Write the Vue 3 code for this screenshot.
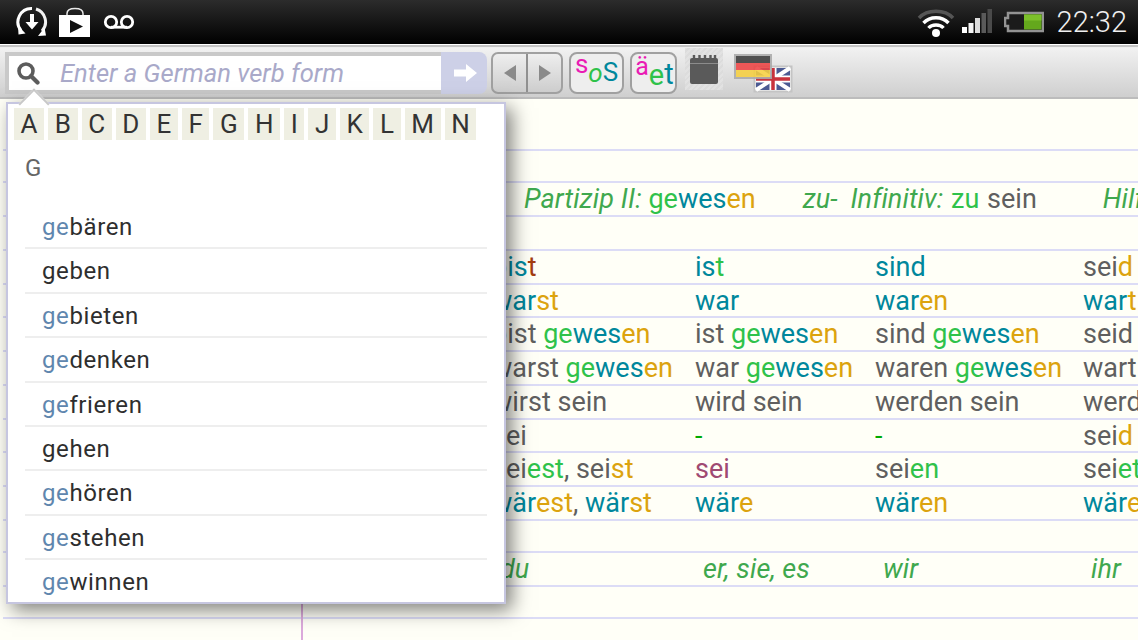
<template>
  <div class="screen">
    <!-- android status bar -->
    <header class="status-bar">
      <div class="status-left">
        <svg width="32" height="32" viewBox="0 0 32 32" class="ic-sync">
          <path d="M5 24.5A13.5 13.5 0 0 1 16 2.5" fill="none" stroke="#fff" stroke-width="3" />
          <path d="M20 3A13.5 13.5 0 0 1 26 25" fill="none" stroke="#f2f2f2" stroke-width="3" />
          <path d="M2 19.5L9.5 27.5L2.5 28.5Z M22 30L30 29.5L28.5 21.5Z" fill="#fff" />
          <path d="M14 8h4v8h4.5L16 23.5L9.5 16H14Z" fill="#fff" />
        </svg>
        <svg width="32" height="30" viewBox="0 0 32 30" class="ic-bag">
          <path d="M8 9V6.5C8 3.5 11 1.5 16 1.5S24 3.5 24 6.5V9" fill="none" stroke="#e8e8e8" stroke-width="1.5" />
          <path d="M0 8H31V30H0Z" fill="#fff" />
          <path d="M11 13L24 19.5L11 26Z" fill="#111" />
        </svg>
        <svg width="32" height="16" viewBox="0 0 32 16" class="ic-vm">
          <circle cx="8" cy="8" r="5.7" fill="none" stroke="#fff" stroke-width="2.8" />
          <circle cx="24" cy="8" r="5.7" fill="none" stroke="#fff" stroke-width="2.8" />
          <path d="M8 13.2H24" stroke="#fff" stroke-width="2.8" />
        </svg>
      </div>
      <div class="status-right">
        <svg width="38" height="32" viewBox="0 0 38 32" class="ic-wifi">
          <path d="M2 12C10 3 28 3 36 12" fill="none" stroke="#555" stroke-width="3.4" />
          <path d="M6.5 17C13 10 25 10 31.5 17" fill="none" stroke="#fff" stroke-width="3.4" />
          <path d="M11.5 22C15 18 23 18 26.5 22" fill="none" stroke="#fff" stroke-width="3.4" />
          <circle cx="19" cy="27" r="4" fill="#fff" />
        </svg>
        <svg width="30" height="26" viewBox="0 0 30 26" class="ic-signal">
          <rect x="0" y="18" width="5" height="6" fill="#fff" />
          <rect x="6.5" y="14" width="5" height="10" fill="#f4f4f4" />
          <rect x="13" y="9" width="5" height="15" fill="#dcdcdc" />
          <rect x="19.5" y="4" width="4.5" height="20" fill="#5a5a5a" />
          <rect x="25.5" y="0" width="4.5" height="24" fill="#4a4a4a" />
        </svg>
        <svg width="40" height="22" viewBox="0 0 40 22" class="ic-battery">
          <path d="M4 2H39V20H4V15H1V7H4Z" fill="#1b1b1b" stroke="#939393" stroke-width="2.5" />
          <rect x="20" y="3.5" width="17.5" height="15" fill="#64a81c" />
          <rect x="20" y="3.5" width="17.5" height="6" fill="#7cc02a" />
        </svg>
        <span class="clock">22:32</span>
      </div>
    </header>
    <div class="status-edge"></div>

    <!-- toolbar -->
    <nav class="toolbar">
      <div class="search">
        <div class="search-box">
          <svg width="24" height="24" viewBox="0 0 24 24">
            <circle cx="10" cy="10" r="7" fill="none" stroke="#5c5c5c" stroke-width="3.6" />
            <path d="M15 15L21.5 21.5" stroke="#5c5c5c" stroke-width="4.2" stroke-linecap="round" />
          </svg>
          <span class="placeholder">Enter a German verb form</span>
        </div>
        <div class="search-go">
          <svg width="24" height="20" viewBox="0 0 24 20">
            <path d="M0 6.5H12V1L23 10L12 19V13.5H0Z" fill="#fff" />
          </svg>
        </div>
      </div>
      <div class="nav-group">
        <button class="nav-btn"><span class="tri-left"></span></button>
        <button class="nav-btn"><span class="tri-right"></span></button>
      </div>
      <button class="word-btn sos"><span class="s1 mag">s</span><span class="s2 grn">o</span><span class="s3 teal">S</span></button>
      <button class="word-btn aet"><span class="a1 mag">ä</span><span class="a2 grn">e</span><span class="a3 teal">t</span></button>
      <div class="calendar">
        <svg width="28" height="30" viewBox="0 0 28 30">
          <rect x="0" y="4" width="28" height="26" rx="2" fill="#5a5a5a" />
          <rect x="0" y="9" width="28" height="1" fill="#8c8c8c" />
          <path d="M4 1V7M9.5 1V7M15 1V7M20.5 1V7M25 1V7" stroke="#5a5a5a" stroke-width="2.4" />
        </svg>
      </div>
      <svg class="flags" width="60" height="40" viewBox="0 0 60 40">
        <g>
          <rect x="21.5" y="13.5" width="37" height="25" fill="#fff" stroke="#c4c4c4" stroke-width="2" />
          <rect x="23" y="15" width="34" height="22" fill="#4c5a92" />
          <path d="M23 15L57 37M57 15L23 37" stroke="#fff" stroke-width="4" />
          <path d="M40 15V37M23 26H57" stroke="#fff" stroke-width="7" />
          <path d="M40 15V37M23 26H57" stroke="#c8323c" stroke-width="3.5" />
        </g>
        <g opacity="0.88">
          <rect x="1" y="1" width="38" height="25" fill="#aaa" />
          <rect x="3" y="3" width="34" height="7" fill="#3a3a3a" />
          <rect x="3" y="10" width="34" height="7" fill="#ee4444" />
          <rect x="3" y="17" width="34" height="7" fill="#f6d040" />
        </g>
      </svg>
    </nav>

    <!-- conjugation table -->
    <main class="content">
      <div class="row spacer-top"></div>
      <div class="row short-32"></div>
      <div class="row forms">
        <span class="form"><em class="lbl">Partizip II:</em> <span class="grn">ge</span><span class="teal">wes</span><span class="org">en</span></span>
        <span class="form wide"><em class="lbl"><span class="hyph">zu-</span> Infinitiv:</em> <span class="grn">zu</span> <span class="gry">sein</span></span>
        <span class="form hilf"><em class="lbl">Hilfsverb:</em></span>
      </div>
      <div class="row"></div>
      <div
        v-for="(row, i) in rows"
        :key="i"
        class="row cells"
        :class="{ short: row.short }"
      >
        <span v-for="(cell, c) in row.cells" :key="c" class="cell">
          <span v-for="(seg, s) in cell" :key="s" :class="seg[1]">{{ seg[0] }}</span>
        </span>
      </div>
      <div class="row short-32"></div>
      <div class="row cells pronouns">
        <em v-for="p in pronouns" :key="p" class="cell lbl">{{ p }}</em>
      </div>
      <div class="row short-32"></div>
      <div class="v-rule"></div>
    </main>

    <!-- alphabet popover -->
    <aside class="popover">
      <div class="arrow"></div>
      <div class="letters">
        <span v-for="l in letters" :key="l" class="letter">{{ l }}</span>
      </div>
      <div class="group">G</div>
      <ul class="verbs">
        <li v-for="v in verbs" :key="v.rest">
          <span :class="{ hl: v.hl }">ge</span>{{ v.rest }}
        </li>
      </ul>
    </aside>
  </div>
</template>

<script setup>
const letters = 'ABCDEFGHIJKLMN'.split('')

const verbs = [
  { rest: 'bären', hl: true },
  { rest: 'ben', hl: false },
  { rest: 'bieten', hl: true },
  { rest: 'denken', hl: true },
  { rest: 'frieren', hl: true },
  { rest: 'hen', hl: false },
  { rest: 'hören', hl: true },
  { rest: 'stehen', hl: true },
  { rest: 'winnen', hl: true }
]

const gewesen = [['ge', 'grn'], ['wes', 'teal'], ['en', 'org']]

const rows = [
  { cells: [
    [['b', 'gry'], ['is', 'teal'], ['t', 'brn']],
    [['is', 'teal'], ['t', 'grn']],
    [['sind', 'teal']],
    [['sei', 'gry'], ['d', 'org']]
  ] },
  { short: true, cells: [
    [['war', 'teal'], ['st', 'org']],
    [['war', 'teal']],
    [['war', 'teal'], ['en', 'org']],
    [['war', 'teal'], ['t', 'org']]
  ] },
  { cells: [
    [['bist ', 'gry'], ...gewesen],
    [['ist ', 'gry'], ...gewesen],
    [['sind ', 'gry'], ...gewesen],
    [['seid ', 'gry'], ...gewesen]
  ] },
  { cells: [
    [['warst ', 'gry'], ...gewesen],
    [['war ', 'gry'], ...gewesen],
    [['waren ', 'gry'], ...gewesen],
    [['wart ', 'gry'], ...gewesen]
  ] },
  { cells: [
    [['wirst sein', 'gry']],
    [['wird sein', 'gry']],
    [['werden sein', 'gry']],
    [['werdet sein', 'gry']]
  ] },
  { short: true, cells: [
    [['sei', 'gry']],
    [['-', 'dash']],
    [['-', 'dash']],
    [['sei', 'gry'], ['d', 'org']]
  ] },
  { cells: [
    [['sei', 'gry'], ['est', 'grn'], [', ', 'gry'], ['sei', 'gry'], ['st', 'org']],
    [['sei', 'mrn']],
    [['sei', 'gry'], ['en', 'grn']],
    [['sei', 'gry'], ['et', 'grn']]
  ] },
  { cells: [
    [['wär', 'teal'], ['est', 'org'], [', ', 'gry'], ['wär', 'teal'], ['st', 'org']],
    [['wär', 'teal'], ['e', 'org']],
    [['wär', 'teal'], ['en', 'org']],
    [['wär', 'teal'], ['et', 'org']]
  ] }
]

const pronouns = ['du', 'er, sie, es', 'wir', 'ihr']
</script>

<style>
html, body {
  margin: 0;
  background: #fffff7;
  overflow: hidden;
}
</style>

<style scoped>
.screen {
  position: relative;
  width: 1138px;
  height: 640px;
  overflow: hidden;
  font-family: Roboto, "Liberation Sans", sans-serif;
  background: #fffff7;
}

/* status bar */
.status-bar {
  height: 44px;
  display: flex;
  justify-content: space-between;
  background: linear-gradient(#2c2c2c, #000);
  color: #eee;
}
.status-left {
  display: flex;
  align-items: center;
  padding-left: 16px;
}
.ic-bag { margin-left: 11px; margin-top: -1px; }
.ic-vm { margin-left: 12px; }
.status-right {
  display: flex;
  align-items: center;
  padding-right: 11px;
}
.ic-signal { margin-left: 7px; }
.ic-battery { margin-left: 12px; }
.clock {
  margin-left: 13px;
  font-size: 29px;
  font-weight: 300;
  color: #f0f0f0;
}
.status-edge {
  height: 4px;
  background: linear-gradient(#fff 0 1px, #c4c4c4 1px 3px, #eee 3px);
}

/* toolbar */
.toolbar {
  height: 51px;
  box-sizing: border-box;
  display: flex;
  align-items: flex-start;
  padding: 4px 0 0 5px;
  background: linear-gradient(#f1f1f1, #cfcfcf);
  border-bottom: 2px solid #bcbcbc;
}
.search {
  display: flex;
  width: 482px;
  height: 42px;
}
.search-box {
  flex: 1;
  display: flex;
  align-items: center;
  box-sizing: border-box;
  padding-left: 7px;
  background: #fff;
  border: 4px solid #c9c9c9;
  border-right-width: 0;
}
.placeholder {
  margin-left: 20px;
  font-size: 25.6px;
  font-style: italic;
  color: #a9a9c9;
}
.search-go {
  width: 46px;
  box-sizing: border-box;
  padding-left: 4px;
  display: flex;
  align-items: center;
  justify-content: center;
  background: #cdd0e7;
  border-radius: 0 8px 8px 0;
}
.nav-group {
  display: flex;
  margin-left: 4px;
  width: 72px;
  height: 42px;
  box-sizing: border-box;
  border: 2px solid #a0a0a0;
  border-radius: 7px;
  background: linear-gradient(#eee, #cdcdcd);
  overflow: hidden;
}
.nav-btn {
  flex: 1;
  padding: 0;
  border: 0;
  background: none;
  display: flex;
  align-items: center;
  justify-content: center;
}
.nav-btn + .nav-btn { border-left: 2px solid #909090; }
.tri-left, .tri-right {
  width: 0;
  height: 0;
  border-top: 8px solid transparent;
  border-bottom: 8px solid transparent;
}
.tri-left { border-right: 12px solid #8a8a8a; }
.tri-right { border-left: 12px solid #8a8a8a; }
.word-btn {
  height: 42px;
  box-sizing: border-box;
  padding: 0;
  margin-left: 6px;
  display: flex;
  align-items: flex-start;
  justify-content: center;
  border: 2px solid #a0a0a0;
  border-radius: 8px;
  background: #eeeeee;
  font-family: inherit;
  font-size: 26px;
  line-height: 30px;
  white-space: nowrap;
}
.sos { width: 55px; }
.aet { width: 47px; padding-left: 2px; font-size: 29px; }
.s1 { margin-top: -5px; }
.s2 { margin-top: 4px; font-style: italic; }
.s3 { margin-top: 3px; }
.a1 { margin-top: -2px; font-size: 25px; }
.a2 { margin-top: 6px; }
.a3 { margin-top: 5px; }
.mag { color: #ea1cb4; }
.calendar {
  margin-left: 8px;
  margin-top: -4px;
  width: 38px;
  height: 42px;
  display: flex;
  align-items: center;
  justify-content: center;
  background: repeating-linear-gradient(135deg, #e2e2e2 0 2px, #dcdcdc 2px 4px);
}
.flags { margin-left: 10px; margin-top: 1px; }

/* table */
.content {
  position: relative;
  font-size: 27px;
  color: #5f5f5f;
}
.row {
  height: 34px;
  box-sizing: border-box;
  margin-left: 3px;
  border-bottom: 2px solid #dcdcf6;
  white-space: nowrap;
  overflow: hidden;
}
.row.spacer-top { height: 52px; }
.row.short { height: 33px; }
.row.short-32 { height: 32px; }
.forms {
  display: flex;
  gap: 47px;
  padding-left: 521px;
  line-height: 32px;
}
.wide { word-spacing: 1px; }
.hyph { margin-right: 5px; }
.hilf { margin-left: 19px; }
.cells {
  display: grid;
  grid-template-columns: 203px 180px 208px 1fr;
  padding-left: 489px;
  line-height: 32px;
}
.cell { overflow: hidden; white-space: pre; }
.pronouns .cell { padding-left: 8px; }
.lbl { color: #3fa84e; font-style: italic; letter-spacing: 0.1px; }
.grn { color: #2fc24a; }
.teal { color: #00879c; }
.org { color: #dca30e; }
.gry { color: #5f5f5f; }
.brn { color: #a33d12; }
.mrn { color: #a04a72; }
.dash { color: #00aa00; }
.v-rule {
  position: absolute;
  left: 301px;
  top: 20px;
  width: 2px;
  height: 540px;
  background: #dcaadc;
}

/* popover */
.popover {
  position: absolute;
  left: 6px;
  top: 102px;
  width: 500px;
  height: 502px;
  box-sizing: border-box;
  background: #fff;
  border: 2px solid #c6c6e0;
  box-shadow: 6px 6px 18px rgba(0, 0, 0, 0.5);
}
.arrow {
  position: absolute;
  left: 15px;
  top: -11px;
  width: 20px;
  height: 20px;
  background: #fff;
  border-left: 2px solid #c8c8c8;
  border-top: 2px solid #c8c8c8;
  transform: rotate(45deg);
}
.letters {
  position: relative;
  display: flex;
  gap: 4px;
  padding: 4px 0 0 6px;
}
.letter {
  height: 32px;
  line-height: 32px;
  padding: 0 6.6px;
  background: #efefe3;
  color: #333;
  font-size: 26px;
}
.group {
  margin: 14px 0 0 17px;
  font-size: 24px;
  line-height: 28px;
  color: #666;
}
.verbs {
  list-style: none;
  margin: 23px 0 0 17px;
  padding: 0;
  width: 462px;
}
.verbs li {
  height: 44.4px;
  box-sizing: border-box;
  padding-left: 17px;
  border-bottom: 2px solid #eeeeee;
  font-size: 24px;
  line-height: 45px;
  letter-spacing: 0.6px;
  color: #2e2e2e;
}
.verbs li:last-child { border-bottom: 0; }
.hl { color: #5f86ae; }
</style>
